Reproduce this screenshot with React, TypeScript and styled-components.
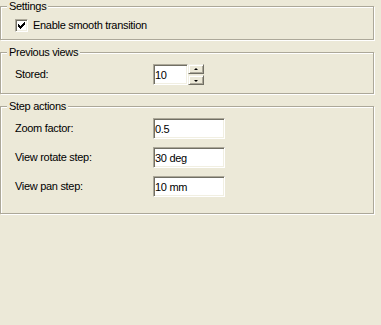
import React from 'react';
import styled, { createGlobalStyle } from 'styled-components';

const GlobalStyle = createGlobalStyle`
  html, body {
    margin: 0;
    padding: 0;
    height: 100%;
    background: #ece9d8;
  }
  body {
    font-family: 'Liberation Sans', Arial, sans-serif;
    font-size: 11px;
    letter-spacing: -0.3px;
    color: #000;
  }
`;

const Page = styled.div`
  width: 381px;
  height: 325px;
  background: #ece9d8;
  display: flex;
  flex-direction: column;
  gap: 6px;
`;

const Group = styled.fieldset`
  margin: 0;
  padding: 0;
  width: 374px;
  box-sizing: border-box;
  border: 1px solid #aca899;
  box-shadow: 1px 1px 0 #fff, inset 1px 1px 0 #fff;
  min-width: 0;
`;

const Legend = styled.legend`
  margin-left: 6px;
  padding: 0 2px;
  font-size: 11px;
  line-height: 13px;
  background: #ece9d8;
`;

const Body = styled.div<{ $top: number; $bottom: number }>`
  padding: ${p => p.$top}px 14px ${p => p.$bottom}px 14px;
`;

const CheckRow = styled.label`
  display: flex;
  align-items: center;
  gap: 5px;
  height: 13px;
  line-height: 13px;
`;

const CheckBox = styled.span`
  width: 13px;
  height: 13px;
  box-sizing: border-box;
  background: #fff;
  border-top: 1px solid #aca899;
  border-left: 1px solid #aca899;
  border-right: 1px solid #fff;
  border-bottom: 1px solid #fff;
  box-shadow: inset 1px 1px 0 #716f64, inset -1px -1px 0 #f1efe2;
  display: flex;
  align-items: center;
  justify-content: center;
`;

const Form = styled.div<{ $gap: number }>`
  display: grid;
  grid-template-columns: 138px auto;
  row-gap: ${p => p.$gap}px;
  align-items: center;
`;

const Label = styled.span`
  line-height: 13px;
`;

const Field = styled.div`
  display: flex;
`;

const TextBox = styled.input<{ $w: number }>`
  width: ${p => p.$w}px;
  height: 21px;
  box-sizing: border-box;
  margin: 0;
  padding: 0 1px;
  font-family: 'Liberation Sans', Arial, sans-serif;
  font-size: 11px;
  letter-spacing: -0.3px;
  color: #000;
  background: #fff;
  outline: none;
  border-top: 1px solid #aca899;
  border-left: 1px solid #aca899;
  border-right: 1px solid #fff;
  border-bottom: 1px solid #fff;
  box-shadow: inset 1px 1px 0 #716f64, inset -1px -1px 0 #f1efe2;
`;

const Spinner = styled.div`
  display: flex;
  flex-direction: column;
  gap: 1px;
  width: 16px;
  height: 21px;
`;

const SpinButton = styled.div<{ $down?: boolean }>`
  height: 10px;
  box-sizing: border-box;
  background: #ece9d8;
  border-top: 1px solid #f1efe2;
  border-left: 1px solid #f1efe2;
  border-right: 1px solid #716f64;
  border-bottom: 1px solid #716f64;
  box-shadow: inset 1px 1px 0 #fff, inset -1px -1px 0 #aca899;
  display: flex;
  align-items: center;
  justify-content: center;

  &::after {
    content: '';
    width: 0;
    height: 0;
    border-left: 2px solid transparent;
    border-right: 2px solid transparent;
    ${p =>
      p.$down
        ? 'border-top: 2px solid #000; margin-top: 1px;'
        : 'border-bottom: 2px solid #000; margin-top: -1px;'}
  }
`;

const CheckMark = () => {
  const px = [
    [6, 0], [5, 1], [6, 1], [0, 2], [4, 2], [5, 2], [6, 2],
    [0, 3], [1, 3], [3, 3], [4, 3], [5, 3],
    [0, 4], [1, 4], [2, 4], [3, 4], [4, 4],
    [1, 5], [2, 5], [3, 5], [2, 6],
  ];
  return (
    <svg width="7" height="7" viewBox="0 0 7 7" shapeRendering="crispEdges">
      {px.map(([x, y]) => (
        <rect key={`${x}-${y}`} x={x} y={y} width="1" height="1" fill="#000" />
      ))}
    </svg>
  );
};

export default function App() {
  return (
    <>
      <GlobalStyle />
      <Page>
        <Group>
          <Legend>Settings</Legend>
          <Body $top={6} $bottom={7}>
            <CheckRow>
              <CheckBox>
                <CheckMark />
              </CheckBox>
              Enable smooth transition
            </CheckRow>
          </Body>
        </Group>

        <Group>
          <Legend>Previous views</Legend>
          <Body $top={5} $bottom={8}>
            <Form $gap={0}>
              <Label>Stored:</Label>
              <Field>
                <TextBox $w={35} defaultValue="10" />
                <Spinner>
                  <SpinButton />
                  <SpinButton $down />
                </Spinner>
              </Field>
            </Form>
          </Body>
        </Group>

        <Group>
          <Legend>Step actions</Legend>
          <Body $top={5} $bottom={16}>
            <Form $gap={8}>
              <Label>Zoom factor:</Label>
              <TextBox $w={72} defaultValue="0.5" />
              <Label>View rotate step:</Label>
              <TextBox $w={72} defaultValue="30 deg" />
              <Label>View pan step:</Label>
              <TextBox $w={72} defaultValue="10 mm" />
            </Form>
          </Body>
        </Group>
      </Page>
    </>
  );
}
